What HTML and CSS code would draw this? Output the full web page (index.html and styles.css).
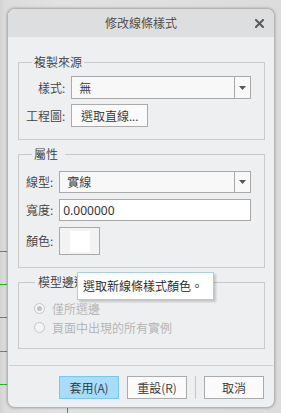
FILE: index.html
```html
<!DOCTYPE html>
<html lang="zh-Hant">
<head>
<meta charset="utf-8">
<title>修改線條樣式</title>
<link rel="stylesheet" href="styles.css">
</head>
<body>
<div class="dialog">
  <div class="titlebar">
    <span class="title">修改線條樣式</span>
    <span class="close"><svg width="9" height="9" viewBox="0 0 9 9"><path d="M1 1L8 8M8 1L1 8" stroke="#5a5a5a" stroke-width="2" stroke-linecap="square"/></svg></span>
  </div>
  <div class="content">
    <fieldset class="group g1">
      <legend>複製來源</legend>
      <div class="form">
        <label class="lbl">樣式:</label>
        <div class="select"><span class="val">無</span><span class="arrow"><svg width="7" height="4" viewBox="0 0 7 4"><path d="M0 0H7L3.5 4Z" fill="#555"/></svg></span></div>
        <label class="lbl">工程圖:</label>
        <div><button class="btn pick">選取直線...</button></div>
      </div>
    </fieldset>
    <fieldset class="group g2">
      <legend class="l2">屬性</legend>
      <div class="form f2">
        <label class="lbl">線型:</label>
        <div class="select"><span class="val">實線</span><span class="arrow"><svg width="7" height="4" viewBox="0 0 7 4"><path d="M0 0H7L3.5 4Z" fill="#555"/></svg></span></div>
        <label class="lbl">寬度:</label>
        <div class="input">0.000000</div>
        <label class="lbl">顏色:</label>
        <div><button class="swatch"><span class="chip"></span></button></div>
      </div>
    </fieldset>
    <fieldset class="group g3">
      <legend class="l3">模型邊選擇</legend>
      <div class="radio-row"><span class="radio on"></span><span>僅所選邊</span></div>
      <div class="radio-row"><span class="radio"></span><span>頁面中出現的所有實例</span></div>
    </fieldset>
  </div>
  <div class="sep"></div>
  <div class="actions">
    <button class="btn act primary">套用(A)</button>
    <button class="btn act">重設(R)</button>
    <span class="vdiv"></span>
    <button class="btn act">取消</button>
  </div>
  <div class="tooltip">選取新線條樣式顏色。</div>
</div>
</body>
</html>
```
FILE: styles.css
```css
html, body {
  margin: 0;
  padding: 0;
}
body {
  width: 281px;
  height: 413px;
  overflow: hidden;
  box-sizing: border-box;
  padding: 8px 6px 0 7px;
  font-family: "Noto Sans CJK TC", "Noto Sans", sans-serif;
  font-size: 12px;
  font-weight: 350;
  color: #3c3c3c;
  background:
    linear-gradient(#23b623, #23b623) 0 251px / 7px 1px no-repeat,
    linear-gradient(#23b623, #23b623) 0 284px / 7px 1px no-repeat,
    linear-gradient(#23b623, #23b623) 0 317px / 7px 1px no-repeat,
    linear-gradient(#23b623, #23b623) 0 351px / 7px 1px no-repeat,
    linear-gradient(#23b623, #23b623) 0 384px / 7px 1px no-repeat,
    linear-gradient(#23b623, #23b623) 67px 408px / 1px 5px no-repeat,
    linear-gradient(90deg, #d2d2d2, #dcdcdc 5px, #e2e2e2 60px, #dcdcdc);
}
.dialog {
  position: relative;
  width: 268px;
  height: 400px;
  box-sizing: border-box;
  border: 1px solid #b4b4b4;
  border-radius: 8px;
  background: #eeeff1;
  box-shadow: 0 0 3px rgba(0, 0, 0, 0.28);
  display: flex;
  flex-direction: column;
}
.titlebar {
  height: 28px;
  flex: none;
  background: #dcdedf;
  border-radius: 7px 7px 0 0;
  display: flex;
  align-items: center;
  justify-content: center;
  position: relative;
}
.title {
  color: #454545;
  font-size: 12px;
  line-height: 16px;
}
.close {
  position: absolute;
  right: 10px;
  top: 10px;
  width: 9px;
  height: 9px;
  display: flex;
}
.content {
  padding: 17px 9px 0 10px;
  display: flex;
  flex-direction: column;
}
.group {
  margin: 0;
  border: 1px solid #cacaca;
  padding: 6px 13px 12px 7px;
  min-width: 0;
}
.group legend {
  margin-left: 6px;
  padding: 0 2px;
  line-height: 16px;
  color: #3c3c3c;
}
.group + .group {
  margin-top: 6px;
}
.g2 {
  padding-top: 9px;
}
.l2 {
  padding-right: 7px !important;
}
.g3 {
  padding: 9px 13px 11px 15px;
}
.l3 {
  margin-left: 1px !important;
  padding: 0 3px 0 3px !important;
}
.form {
  display: grid;
  grid-template-columns: auto 1fr;
  column-gap: 6px;
  row-gap: 5px;
  align-items: center;
}
.f2 {
  row-gap: 6px;
}
.lbl {
  text-align: right;
  line-height: 16px;
  color: #404040;
}
.select {
  height: 23px;
  box-sizing: border-box;
  border: 1px solid #a9a9a9;
  background: #f8f8f8;
  display: flex;
  align-items: center;
}
.f2 .select, .input {
  height: 22px;
}
.val {
  flex: 1;
  padding-left: 7px;
  line-height: 16px;
  color: #333;
}
.arrow {
  width: 15px;
  align-self: stretch;
  border-left: 1px solid #a9a9a9;
  display: flex;
  align-items: center;
  justify-content: center;
}
.input {
  box-sizing: border-box;
  border: 1px solid #a9a9a9;
  background: #fff;
  padding-left: 3px;
  display: flex;
  align-items: center;
  font-family: "Noto Sans", "Open Sans", sans-serif;
  font-size: 12px;
  font-weight: 400;
  color: #333;
}
.btn {
  font-family: "Noto Sans CJK TC", "Noto Sans", sans-serif;
  font-size: 12px;
  font-weight: 350;
  color: #333;
  height: 23px;
  box-sizing: border-box;
  border: 1px solid #ababab;
  background: #fafafa;
  padding: 0;
  margin: 0;
  line-height: 16px;
  display: block;
}
.pick {
  width: 77px;
}
.swatch {
  width: 41px;
  height: 28px;
  box-sizing: border-box;
  border: 1px solid #a9a9a9;
  background: #f3f3f3;
  padding: 0;
  margin: 0;
  display: flex;
  align-items: center;
  justify-content: center;
}
.chip {
  width: 20px;
  height: 21px;
  background: #fff;
}
.radio-row {
  display: flex;
  align-items: center;
  height: 19px;
  color: #b2b2b2;
  gap: 7px;
  line-height: 16px;
}
.radio {
  width: 11px;
  height: 11px;
  box-sizing: border-box;
  border: 1px solid #c6c6c6;
  border-radius: 50%;
  background: #f5f5f5;
  display: flex;
  align-items: center;
  justify-content: center;
}
.radio.on::after {
  content: "";
  width: 5px;
  height: 5px;
  border-radius: 50%;
  background: #c2c2c2;
}
.sep {
  margin: 16px 1px 0 1px;
  height: 1px;
  background: #cfcfcf;
}
.actions {
  display: flex;
  justify-content: flex-end;
  align-items: stretch;
  gap: 8px;
  padding: 10px 10px 0 0;
}
.act {
  width: 60px;
}
.primary {
  background: #a7dcfb;
  border-color: #77c6f4;
}
.vdiv {
  width: 1px;
  background: #c4c4c4;
}
.tooltip {
  position: absolute;
  left: 69px;
  top: 263px;
  width: 137px;
  height: 28px;
  box-sizing: border-box;
  border: 1px solid #a8cde4;
  background: #fff;
  padding-left: 5px;
  display: flex;
  align-items: center;
  color: #222;
  line-height: 16px;
  box-shadow: 2px 2px 2px rgba(0, 0, 0, 0.18);
  white-space: nowrap;
}
```
